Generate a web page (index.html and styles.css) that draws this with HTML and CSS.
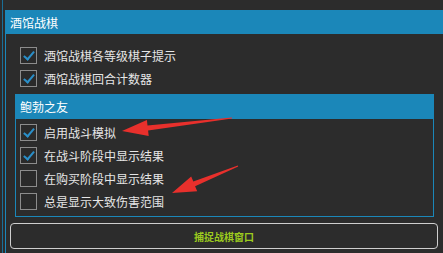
FILE: index.html
```html
<!DOCTYPE html>
<html lang="zh">
<head>
    <meta charset="UTF-8">
    <title>酒馆战棋</title>
    <link rel="stylesheet" href="styles.css">
</head>
<body>
    <div class="frame">
        <div class="group outer">
            <div class="group-title">酒馆战棋</div>
            <div class="group-body">
                <label class="check-row"><span class="box checked"></span>酒馆战棋各等级棋子提示</label>
                <label class="check-row"><span class="box checked"></span>酒馆战棋回合计数器</label>

                <div class="group inner">
                    <div class="group-title">鲍勃之友</div>
                    <div class="group-body">
                        <label class="check-row"><span class="box checked"></span>启用战斗模拟</label>
                        <label class="check-row"><span class="box checked"></span>在战斗阶段中显示结果</label>
                        <label class="check-row"><span class="box"></span>在购买阶段中显示结果</label>
                        <label class="check-row"><span class="box"></span>总是显示大致伤害范围</label>
                    </div>
                </div>

                <button class="capture-btn">捕捉战棋窗口</button>
            </div>
        </div>
    </div>

    <!-- annotation arrows -->
    <svg class="marks" width="443" height="253" viewBox="0 0 443 253">
        <polygon points="122,131 148.7,135.9 148.1,130.4 232.1,118.5 231.9,117.5 147.5,125.5 146.9,120" fill="#e8302c"/>
        <polygon points="172,193 197.2,191.3 195.1,186.2 238.2,166.5 237.8,165.5 193.3,181.6 191.2,176.5" fill="#e8302c"/>
    </svg>
</body>
</html>
```

FILE: styles.css
```css
html, body{
    margin: 0;
    padding: 0;
    overflow: hidden;
}
body{
    width: 443px;
    height: 253px;
    background: #2c2c2c;
    font-family: "Noto Sans CJK SC", "Noto Sans", sans-serif;
    color: #e6e6e6;
    position: relative;
}
.frame{
    box-sizing: border-box;
    margin-left: 2px;
    padding-top: 10px;
    padding-left: 2px;
    border-left: 1px solid #1a6f97;
    height: 253px;
}
.group{
    border: 1px solid #1b87b9;
}
.group.outer{
    box-sizing: border-box;
    width: 438px;
    height: 243px;
    border-right: none;
    border-bottom: none;
    overflow: hidden;
}
.group-title{
    background: #1b87b9;
    color: #fff;
    font-size: 12px;
    line-height: 23px;
    height: 23px;
    padding-left: 4px;
}
.outer > .group-body{
    padding: 10px 0 0 14px;
}
.check-row{
    display: flex;
    align-items: center;
    height: 23px;
    font-size: 12px;
}
.box{
    width: 15px;
    height: 15px;
    border: 1px solid #8c8c8c;
    background: #2a2a2a;
    margin-right: 7px;
    position: relative;
}
.box.checked::after{
    content: "";
    position: absolute;
    left: 5px;
    top: 1px;
    width: 4px;
    height: 9px;
    border-right: 2px solid #2a8fc9;
    border-bottom: 2px solid #2a8fc9;
    transform: rotate(40deg);
}
.group.inner{
    width: 417px;
    margin: 4px 0 0 -5px;
}
.inner > .group-title{
    height: 24px;
    line-height: 24px;
}
.inner > .group-body{
    padding: 2px 0 3px 4px;
}
.capture-btn{
    display: block;
    width: 428px;
    height: 26px;
    margin: 6px 0 0 -10px;
    border: 1px solid #cfcfcf;
    border-radius: 4px;
    background: #2c2c2c;
    color: #9ccb1e;
    font-family: "Noto Sans CJK SC", sans-serif;
    font-size: 10px;
    font-weight: bold;
}
.marks{
    position: absolute;
    left: 0;
    top: 0;
    pointer-events: none;
}
```
